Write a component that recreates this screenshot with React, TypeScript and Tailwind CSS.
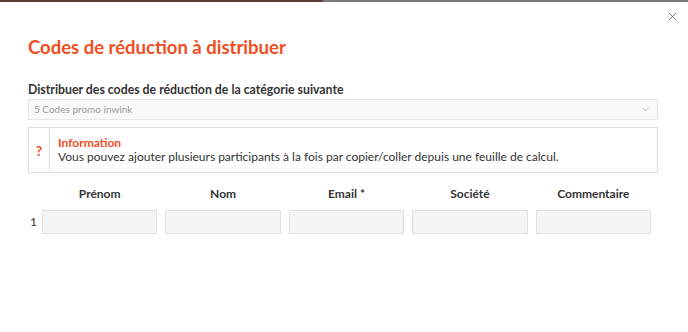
import { ChevronDown, X } from "lucide-react";

const columns = ["Prénom", "Nom", "Email *", "Société", "Commentaire"];

export default function App() {
  return (
    <div className="relative h-[332px] w-[688px] bg-white font-['Lato','Noto_Sans',sans-serif] text-[#333]">
      <div className="flex h-[2px] w-full">
        <div className="w-[323px] bg-[#5e3b33]" />
        <div className="flex-1 bg-[#7a7a7a]" />
      </div>
      <button className="absolute right-[9px] top-[10px] text-[#444]">
        <X size={13} strokeWidth={1.3} />
      </button>

      <div className="px-[28px] pt-[32px]">
        <h1 className="text-[18.5px] font-bold leading-[27px] text-[#f04e23]">Codes de réduction à distribuer</h1>

        <label className="mt-[21px] block text-[12.3px] font-bold leading-[16px] text-[#333]">
          Distribuer des codes de réduction de la catégorie suivante
        </label>
        <div className="mt-[1px] flex h-[21px] w-[630px] items-center justify-between border border-[#e6e6e6] bg-[#f9f9f9] pl-[5px] pr-[6px] text-[10px] text-[#999]">
          <span>5 Codes promo inwink</span>
          <ChevronDown size={11} className="text-[#aaa]" />
        </div>

        <div className="mt-[7px] flex h-[46px] w-[630px] border border-[#dedede]">
          <div className="flex w-[21px] items-center justify-center border-r border-[#dedede] text-[14px] font-bold text-[#f04e23]">?</div>
          <div className="pl-[8px] pt-[8px] text-[12px] leading-[14px]">
            <div className="font-bold text-[#f04e23]">Information</div>
            <div className="text-[#333]">Vous pouvez ajouter plusieurs participants à la fois par copier/coller depuis une feuille de calcul.</div>
          </div>
        </div>

        <div className="mt-[12px] w-[623px]">
          <div className="flex h-[18px] items-center gap-[8px]">
            <div className="w-[6px]" />
            {columns.map((c) => (
              <div key={c} className="flex-1 text-center text-[12px] font-bold text-[#333]">{c}</div>
            ))}
          </div>
          <div className="mt-[7px] flex items-center gap-[8px]">
            <div className="w-[6px] pl-[2px] text-[12px] text-[#333]">1</div>
            {columns.map((c) => (
              <div key={c} className="h-[24px] flex-1 border border-[#e0e0e0] bg-[#f5f5f5]" />
            ))}
          </div>
        </div>
      </div>
    </div>
  );
}
